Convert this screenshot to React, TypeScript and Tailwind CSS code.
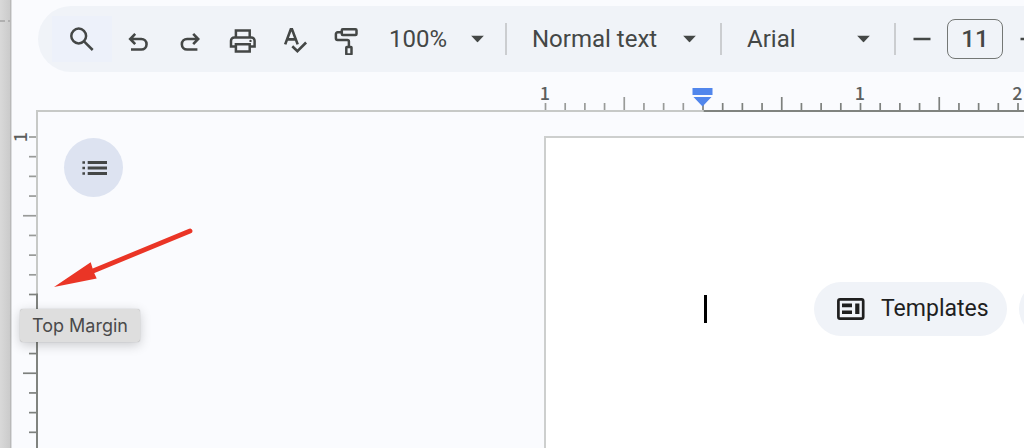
import type { ReactNode } from "react";

const INCH = 157.5;
const STEP = INCH / 8;

// where the first inch mark of each ruler sits, in px
const H_START = 510;
const V_START = 25;

const icons = {
  search: (
    <svg viewBox="0 -2 28 32" className="h-8 w-7" fill="none" stroke="currentColor" strokeWidth="2.5">
      <circle cx="10.7" cy="11" r="7.4" />
      <path d="M16 16.3l8.7 8.7" />
    </svg>
  ),
  undo: (
    <svg viewBox="-2 -7 28 32" className="h-8 w-7" fill="none" stroke="currentColor" strokeWidth="2.6">
      <path d="M9.2 3.8L4.2 9l5 5.2M4.2 9h11.1a5.25 5.25 0 0 1 0 10.5H5" />
    </svg>
  ),
  redo: (
    <svg viewBox="-2 -7 28 32" className="h-8 w-7" fill="none" stroke="currentColor" strokeWidth="2.6">
      <path d="M15.2 3.8l5 5.2-5 5.2M20.2 9H9.1a5.25 5.25 0 0 0 0 10.5H19.4" />
    </svg>
  ),
  print: (
    <svg viewBox="-1 -4 28 32" className="h-8 w-7" fill="none" stroke="currentColor" strokeWidth="2.5">
      <path d="M6.9 10V3.4h13.8V10" />
      <path d="M6.9 19.4H2v-5.6a3.3 3.3 0 0 1 3.3-3.3h17a3.3 3.3 0 0 1 3.3 3.3v5.6h-4.9" />
      <path d="M6.9 17.2h13.8v7.3H6.9z" />
      <circle cx="21.5" cy="13.9" r="1.2" fill="currentColor" stroke="none" />
    </svg>
  ),
  spelling: (
    <svg viewBox="-1 -3 28 32" className="h-8 w-7" fill="none" stroke="currentColor" strokeWidth="2.6">
      <path d="M4.2 18.4L9.8 3.2h1.2l5.7 15.2M6.2 13.4h8.4" />
      <path d="M11.3 20.2l5.1 4.9 8.7-8.6" />
    </svg>
  ),
  paint: (
    <svg viewBox="0 -3 28 32" className="h-8 w-7" fill="none" stroke="currentColor" strokeWidth="2.5">
      <rect x="9.8" y="3.2" width="14.7" height="5.7" rx="1" />
      <path d="M9.8 6.3H5.6A1.7 1.7 0 0 0 3.9 8v4.3A1.7 1.7 0 0 0 5.6 14h9.7a1.6 1.6 0 0 1 1.6 1.6v5" />
      <rect x="14.3" y="20.9" width="5.2" height="7.5" rx="0.5" />
    </svg>
  ),
};

const tools = [
  { title: "Undo", icon: icons.undo },
  { title: "Redo", icon: icons.redo },
  { title: "Print", icon: icons.print },
  { title: "Spelling and grammar check", icon: icons.spelling },
  { title: "Paint format", icon: icons.paint },
];

const Divider = () => <div className="h-8 w-[2px] shrink-0 bg-[#cbcdd0]" />;

const Dropdown = ({
  label,
  options,
  className,
  caret,
}: {
  label: string;
  options: string[];
  className: string;
  caret: string;
}) => (
  <div className={`relative shrink-0 ${className}`}>
    <select aria-label={label} className="h-10 w-full appearance-none bg-transparent text-2xl outline-none">
      {options.map((option) => (
        <option key={option}>{option}</option>
      ))}
    </select>
    <svg
      viewBox="0 0 13 7"
      className={`pointer-events-none absolute top-1/2 h-[7px] w-[13px] -translate-y-1/2 ${caret}`}
    >
      <path d="M0 0h13L6.5 7z" fill="currentColor" />
    </svg>
  </div>
);

const IconButton = ({ title, children }: { title: string; children: ReactNode }) => (
  <button title={title} aria-label={title} className="flex h-[46px] w-[52px] shrink-0 items-center justify-center">
    {children}
  </button>
);

const Toolbar = () => (
  <div className="mt-[6px] ml-[26px] flex h-[66px] items-center overflow-hidden rounded-l-full bg-[#f0f3f8] pl-[14px] text-[#444746]">
    <button
      title="Search the menus"
      aria-label="Search the menus"
      className="flex h-[46px] w-[60px] shrink-0 items-center justify-center bg-[#edf1fa]"
    >
      {icons.search}
    </button>
    {tools.map((tool) => (
      <IconButton key={tool.title} title={tool.title}>
        {tool.icon}
      </IconButton>
    ))}
    <Dropdown label="Zoom" options={["100%", "50%", "200%"]} className="w-[133px] pl-[17px]" caret="right-[21px]" />
    <Divider />
    <Dropdown
      label="Styles"
      options={["Normal text", "Title", "Heading 1"]}
      className="w-[213px] pl-[25px]"
      caret="right-[24px]"
    />
    <Divider />
    <Dropdown label="Font" options={["Arial", "Georgia"]} className="w-[172px] pl-[25px]" caret="right-[24px]" />
    <Divider />
    <button aria-label="Decrease font size" className="flex h-10 w-[51px] shrink-0 items-center justify-center">
      <svg viewBox="0 0 18 18" className="size-[18px]">
        <path d="M0.5 9h17" stroke="currentColor" strokeWidth="2.7" />
      </svg>
    </button>
    <input
      aria-label="Font size"
      defaultValue="11"
      className="h-10 w-14 shrink-0 rounded-lg border-[1.5px] border-[#747775] bg-transparent text-center text-2xl font-medium outline-none"
    />
    <button aria-label="Increase font size" className="flex h-10 w-[51px] shrink-0 items-center justify-center">
      <svg viewBox="0 0 18 18" className="size-[18px]">
        <path d="M0.5 9h17M9 0.5v17" stroke="currentColor" strokeWidth="2.7" />
      </svg>
    </button>
  </div>
);

const rulerFont = "font-['Noto_Sans_CJK_JP',sans-serif] text-lg font-medium";

const HorizontalRuler = () => {
  const margin = H_START + INCH;
  return (
    <svg className="ml-6 h-10 w-[calc(100%-24px)] overflow-hidden" aria-hidden="true">
      <path d={`M0 39H${margin}`} stroke="#c7c9c7" strokeWidth="2" />
      <path d={`M${margin} 39H4000`} stroke="#80837f" strokeWidth="2" />
      {Array.from({ length: 80 }, (_, i) => (
        <path
          key={i}
          d={`M${H_START - 0.5 + i * STEP} ${i % 8 === 4 ? 25 : 31}V38`}
          stroke={i < 8 ? "#999b99" : "#7d807d"}
          strokeWidth="1.7"
        />
      ))}
      {[1, 0, 1, 2, 3, 4].map((n, i) =>
        n > 0 ? (
          <text
            key={i}
            x={H_START - 1 + i * INCH}
            y="28"
            textAnchor="middle"
            fill="#5c5f5e"
            className={rulerFont}
          >
            {n}
          </text>
        ) : null
      )}
      <g transform={`translate(${margin - 11} 16)`} fill="#5186ec">
        <path d="M0 0h20v7H0zM1 9h18l-9 9.5z" />
      </g>
    </svg>
  );
};

const VerticalRuler = () => {
  const margin = V_START + INCH;
  return (
    <svg className="h-full w-[26px] shrink-0 overflow-visible" aria-hidden="true">
      <path d={`M25 0V${margin}`} stroke="#c7c9c7" strokeWidth="2" />
      <path d={`M25 ${margin - 1}V4000`} stroke="#80837f" strokeWidth="2" />
      {Array.from({ length: 80 }, (_, i) => (
        <path
          key={i}
          d={`M${i % 8 === 4 ? 11 : 17} ${V_START + i * STEP}H24`}
          stroke={i < 8 ? "#999b99" : "#7d807d"}
          strokeWidth="1.7"
        />
      ))}
      <text
        transform={`translate(15 ${V_START}) rotate(-90)`}
        textAnchor="middle"
        fill="#5c5f5e"
        className={rulerFont}
      >
        1
      </text>
    </svg>
  );
};

const Page = () => (
  <div className="mt-6 min-w-0 flex-1 overflow-hidden border-t-2 border-l-2 border-[#cdcfce] bg-white">
    <div className="flex items-center pt-[144px] pl-[158px]">
      <div className="h-7 w-[3px] shrink-0 bg-black" />
      <div className="flex gap-3 pl-[107px]">
        <button className="flex h-[54px] w-[193px] shrink-0 items-center gap-4 rounded-full bg-[#f0f3f8] pl-[23px] text-[23px] text-[#1f1f1f]">
          <svg viewBox="0 0 28 22" className="h-[22px] w-7 shrink-0">
            <rect x="1.4" y="1.4" width="24.8" height="19.2" rx="1.6" fill="none" stroke="currentColor" strokeWidth="2.7" />
            <path d="M5 5.6h10v3.6H5zM5 12.4h10v3.6H5zM18.2 5.6h4.2v10.4h-4.2z" fill="currentColor" />
          </svg>
          Templates
        </button>
        <button aria-label="More" className="h-[54px] w-[193px] shrink-0 rounded-full bg-[#f0f3f8]" />
      </div>
    </div>
  </div>
);

const Desktop = () => (
  <div className="w-[11px] shrink-0 border-r border-[#b9b9b9] bg-linear-to-r from-[#d9d9d9] to-[#cbcbcb]">
    <svg viewBox="0 0 10 2" className="mt-5 h-[2px] w-[10px]" aria-hidden="true">
      <path d="M0 1h5M8 1h2" stroke="#b0b0b0" strokeWidth="2" />
    </svg>
  </div>
);

export default function App() {
  return (
    <div className="relative flex h-screen overflow-hidden bg-[#fafbfe] font-[Roboto,sans-serif]">
      <Desktop />
      <main className="flex min-w-0 flex-1 flex-col border-l border-[#dcdddf]">
        <Toolbar />
        <HorizontalRuler />
        <div className="flex min-h-0 flex-1">
          <VerticalRuler />
          <div className="w-[506px] shrink-0 pt-[26px] pl-[26px]">
            <button
              aria-label="Show tabs and outlines"
              className="flex size-[59px] items-center justify-center rounded-full bg-[#dde3f1] text-[#444746]"
            >
              <svg viewBox="0 0 26 16" className="h-4 w-[26px]">
                <path d="M6.7 2.5H26M6.7 8H26M6.7 13.5H26" stroke="currentColor" strokeWidth="3" />
                <path d="M1.4 2.5H4M1.4 8H4M1.4 13.5H4" stroke="currentColor" strokeWidth="2.4" />
              </svg>
            </button>
          </div>
          <Page />
        </div>
      </main>

      {/* Annotation arrow */}
      <svg viewBox="0 0 140 60" className="absolute top-[228px] left-[53px] h-[60px] w-[140px]" aria-hidden="true">
        <path d="M137 3L40 43" stroke="#ea3526" strokeWidth="4.8" strokeLinecap="round" />
        <path d="M1 59L37.7 34.3l3 9.7 3 6.4z" fill="#ea3526" />
      </svg>

      <div
        role="tooltip"
        className="absolute top-[309px] left-5 rounded-[3px] bg-[#dedede] px-3 pt-[5px] pb-1 font-[Inter,sans-serif] text-lg leading-6 text-[#4a4a4a] shadow-[0_3px_12px_rgba(0,0,0,0.2),0_0_1px_rgba(0,0,0,0.35)]"
      >
        Top Margin
      </div>
    </div>
  );
}
